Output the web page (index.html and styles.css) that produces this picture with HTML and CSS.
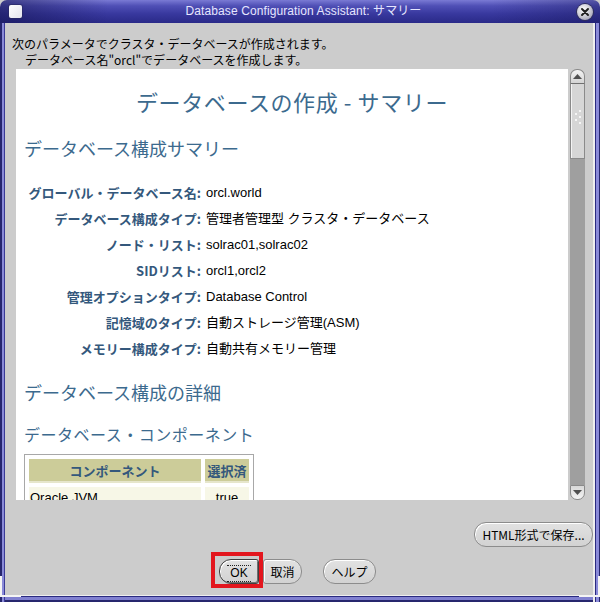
FILE: index.html
```html
<!DOCTYPE html>
<html lang="ja">
<head>
<meta charset="utf-8">
<title>Database Configuration Assistant: サマリー</title>
<link rel="stylesheet" href="styles.css">
</head>
<body>
<div class="window">
  <div class="titlebar">
    <span class="win-icon"></span>
    <span class="title">Database Configuration Assistant: サマリー</span>
    <span class="close"><svg width="12" height="12" viewBox="0 0 12 12"><path d="M3 3 L9 9 M9 3 L3 9" stroke="#202020" stroke-width="2" stroke-linecap="round"/></svg></span>
  </div>
  <div class="frame">
    <div class="intro">
      <p>次のパラメータでクラスタ・データベースが作成されます。</p>
      <p class="indent">データベース名"orcl"でデータベースを作成します。</p>
    </div>
    <div class="panel">
      <div class="content">
        <h1 class="page-title">データベースの作成 - サマリー</h1>
        <h2 class="section">データベース構成サマリー</h2>
        <dl class="summary">
          <dt>グローバル・データベース名:</dt><dd>orcl.world</dd>
          <dt>データベース構成タイプ:</dt><dd>管理者管理型 クラスタ・データベース</dd>
          <dt>ノード・リスト:</dt><dd>solrac01,solrac02</dd>
          <dt>SIDリスト:</dt><dd>orcl1,orcl2</dd>
          <dt>管理オプションタイプ:</dt><dd>Database Control</dd>
          <dt>記憶域のタイプ:</dt><dd>自動ストレージ管理(ASM)</dd>
          <dt>メモリー構成タイプ:</dt><dd>自動共有メモリー管理</dd>
        </dl>
        <h2 class="section details">データベース構成の詳細</h2>
        <h3 class="subsection">データベース・コンポーネント</h3>
        <table class="components">
          <thead>
            <tr><th class="c-name">コンポーネント</th><th class="c-sel">選択済</th></tr>
          </thead>
          <tbody>
            <tr><td class="c-name">Oracle JVM</td><td class="c-sel center">true</td></tr>
          </tbody>
        </table>
      </div>
      <div class="scrollbar">
        <div class="sb-up"><svg width="9" height="5" viewBox="0 0 9 5"><path d="M0 5 L4.5 0 L9 5 Z" fill="#505050"/></svg></div>
        <div class="sb-thumb">
          <svg class="grip" width="8" height="18" viewBox="0 0 8 18">
            <circle cx="6" cy="2" r="1" fill="#fff"/>
            <circle cx="2" cy="5" r="1" fill="#fff"/>
            <circle cx="6" cy="8" r="1" fill="#fff"/>
            <circle cx="2" cy="11" r="1" fill="#fff"/>
            <circle cx="6" cy="14" r="1" fill="#fff"/>
          </svg>
        </div>
        <div class="sb-track"></div>
        <div class="sb-down"><svg width="9" height="5" viewBox="0 0 9 5"><path d="M0 0 L9 0 L4.5 5 Z" fill="#505050"/></svg></div>
      </div>
    </div>
    <div class="save-row">
      <button class="btn save">HTML形式で保存...</button>
    </div>
    <div class="button-row">
      <button class="btn ok"><span class="focus">OK</span></button>
      <button class="btn cancel">取消</button>
      <button class="btn help">ヘルプ</button>
    </div>
    <span class="corner corner-left"></span>
    <span class="corner corner-right"></span>
  </div>
</div>
</body>
</html>
```
FILE: styles.css
```css
* { box-sizing: border-box; }
html, body { margin: 0; padding: 0; }
body {
  width: 600px;
  height: 602px;
  overflow: hidden;
  background: #cccccc;
  font-family: "Liberation Sans", "Noto Sans CJK JP", sans-serif;
}
.window {
  width: 600px;
  height: 602px;
  display: flex;
  flex-direction: column;
  background: #cccccc;
}
.titlebar {
  height: 23px;
  flex: none;
  display: flex;
  align-items: center;
  position: relative;
  border-radius: 7px 7px 0 0;
  background:
    linear-gradient(90deg, rgba(20,20,80,0.55) 0%, rgba(20,20,80,0) 18%, rgba(20,20,80,0) 82%, rgba(20,20,80,0.35) 100%),
    linear-gradient(180deg, #7a7ad4 0%, #5050b6 25%, #38389e 60%, #2a2a88 100%);
  color: #e6e6ff;
}
.win-icon {
  width: 13px;
  height: 13px;
  margin-left: 9px;
  background: linear-gradient(135deg, #ffffff 0%, #e4e4ec 100%);
  border-radius: 2px;
  box-shadow: 0 0 0 1px rgba(40,40,90,0.5);
}
.title {
  flex: 1;
  text-align: center;
  font-size: 12px;
  line-height: 23px;
  padding-left: 8px;
  letter-spacing: 0.1px;
}
.close {
  width: 16px;
  height: 16px;
  margin-right: 7px;
  border-radius: 50%;
  background: radial-gradient(circle at 40% 35%, #ffffff 0%, #d0d0d8 45%, #8a8aa0 100%);
  box-shadow: 0 0 0 1px #30305a;
  display: flex;
  align-items: center;
  justify-content: center;
}
.frame {
  flex: 1;
  position: relative;
  display: flex;
  flex-direction: column;
  padding: 0 6px 7px 6px;
  box-shadow:
    inset 2px 0 0 #26266e,
    inset 4px 0 0 #8a8ad8,
    inset 5px 0 0 #3a3a96,
    inset -1px 0 0 #26266e,
    inset -4px 0 0 #8a8ad8,
    inset -5px 0 0 #2a2a80,
    inset -7px 0 0 #eeeeee,
    inset 0 -2px 0 #26266e,
    inset 0 -5px 0 #8080d0,
    inset 0 -6px 0 #2a2a80,
    inset 0 -7px 0 #eeeeee;
}
.corner {
  position: absolute;
  bottom: 5px;
  width: 21px;
  height: 21px;
}
.corner-left { left: 0; border-left: 2px solid #f4f4f4; border-bottom: 2px solid #f4f4f4; }
.corner-right { right: 0; border-right: 2px solid #f4f4f4; border-bottom: 2px solid #f4f4f4; }

.intro {
  padding-top: 13px;
  font-size: 12px;
  line-height: 16px;
  color: #000;
  font-family: "Noto Sans CJK JP", "Liberation Sans", sans-serif;
}
.intro p { margin: 0 0 0 6px; }
.intro .indent { margin-left: 19px; }

.panel {
  margin: 1px 9px 0 10px;
  height: 431px;
  flex: none;
  display: flex;
}
.content {
  flex: 1;
  background: #ffffff;
  overflow: hidden;
  padding: 0 8px;
}
.page-title {
  margin: 17px 0 0 0;
  font-size: 22px;
  line-height: 30px;
  font-weight: normal;
  text-align: center;
  color: #3c6a8e;
  letter-spacing: 0.6px;
  font-family: "Noto Sans CJK JP", sans-serif;
}
.section {
  margin: 20px 0 0 0;
  font-size: 18px;
  line-height: 24px;
  font-weight: normal;
  color: #3c6a8e;
  font-family: "Noto Sans CJK JP", sans-serif;
}
.section.details { margin-top: 18px; }
.subsection {
  margin: 19px 0 0 0;
  font-size: 16px;
  line-height: 22px;
  font-weight: normal;
  color: #3c6a8e;
  letter-spacing: 0.5px;
  font-family: "Noto Sans CJK JP", sans-serif;
}
.summary {
  margin: 20px 0 0 0;
  display: grid;
  grid-template-columns: 177px 1fr;
  column-gap: 5px;
  font-size: 13px;
  line-height: 26px;
}
.summary dt {
  text-align: right;
  font-weight: bold;
  color: #34587c;
  font-family: "Noto Sans CJK JP", sans-serif;
  font-size: 13px;
}
.summary dd {
  margin: 0;
  color: #000;
}
.components {
  margin-top: 9px;
  border: 1px solid #a8a8a8;
  border-spacing: 4px;
  font-size: 13px;
}
.components th {
  background: #cccc99;
  border-bottom: 2px solid #e6e6cc;
  color: #34587c;
  font-family: "Noto Sans CJK JP", sans-serif;
  font-weight: bold;
  height: 24px;
  padding: 0 1px;
  text-align: center;
}
.components .c-name { width: 172px; }
.components .c-sel { width: 44px; }
.components td {
  background: #f7f7e7;
  height: 22px;
  padding: 3px 1px 0 1px;
  line-height: 16px;
  color: #000;
  vertical-align: top;
}
.components td.center { text-align: center; }

.scrollbar {
  width: 17px;
  flex: none;
  padding-left: 2px;
  background: #cccccc;
  display: flex;
  flex-direction: column;
}
.sb-up, .sb-down {
  height: 15px;
  flex: none;
  background: linear-gradient(180deg, #f4f4f4, #d4d4d4);
  border: 1px solid #8a8a8a;
  display: flex;
  align-items: center;
  justify-content: center;
}
.sb-up { border-radius: 7px 7px 0 0; border-bottom-color: #707070; }
.sb-down { border-radius: 0 0 7px 7px; background: linear-gradient(180deg, #d8d8d8, #f4f4f4); }
.sb-thumb {
  height: 75px;
  flex: none;
  background: #d6d6d6;
  border: 1px solid #8a8a8a;
  border-top: none;
  box-shadow: inset 1px 0 0 #f4f4f4;
  display: flex;
  align-items: center;
  justify-content: center;
}
.grip { margin-top: -6px; }
.sb-track {
  flex: 1;
  background: #9f9f9f;
}

.btn {
  font-family: "Noto Sans CJK JP", "Liberation Sans", sans-serif;
  font-size: 12px;
  color: #000;
  background: linear-gradient(180deg, #e2e2e2 0%, #d2d2d2 100%);
  border: 1px solid #8c8c8c;
  box-shadow: inset 1px 1px 0 #ffffff;
  border-radius: 12px;
  height: 25px;
  padding: 0 9px;
  line-height: 21px;
  cursor: default;
}
.save-row {
  display: flex;
  justify-content: flex-end;
  margin-top: 22px;
  padding-right: 1px;
}
.save { width: 119px; padding: 0 6px; }
.button-row {
  display: flex;
  justify-content: flex-start;
  padding-left: 213px;
  margin-top: 12px;
}
.ok {
  position: relative;
  width: 40px;
  padding: 0 4px;
  border-color: #404040;
  border-radius: 12px 3px 3px 12px;
  box-shadow: inset 1px 1px 0 #ffffff, inset -1px -1px 0 #707070;
}
.ok .focus {
  display: inline-block;
  border-top: 1px dotted #222;
  border-bottom: 1px dotted #222;
  line-height: 15px;
  padding: 0 3px;
  font-family: "Liberation Sans", sans-serif;
}
.ok::after {
  content: "";
  position: absolute;
  left: -9px;
  right: -5px;
  top: -8px;
  bottom: -5px;
  border: 4px solid #e3161e;
  z-index: 2;
}
.cancel {
  width: 39px;
  margin-left: 4px;
  padding: 0 4px;
  border-radius: 3px 12px 12px 3px;
}
.help {
  width: 53px;
  margin-left: 21px;
  padding: 0 6px;
}
```
